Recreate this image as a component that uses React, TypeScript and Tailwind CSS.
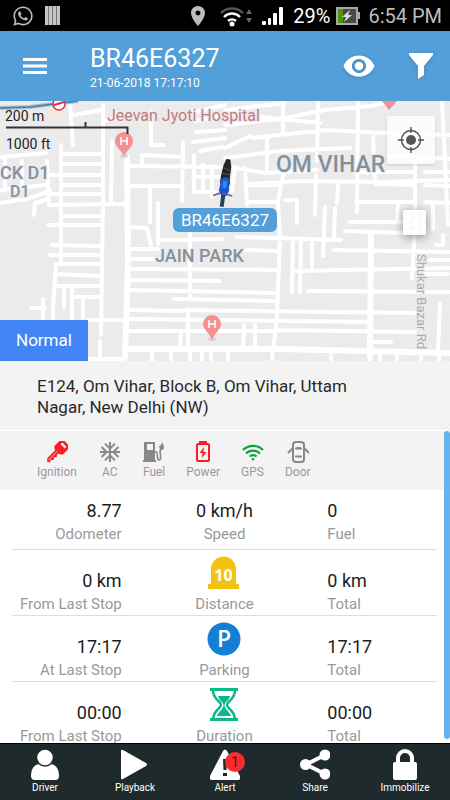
import type { ReactNode } from "react";
import { FaWhatsapp } from "react-icons/fa";
import { MdAcUnit, MdLocationOn, MdVisibility } from "react-icons/md";

const ROADS = [
  // left blocks
  "M103 4V100L101 234M100 240V257M61 44V162M47 60L49 104M112 40L111 102",
  "M63 53H101M63 63H101M50 74H101M63 84H101M50 93H101M49 104L125 103M63 115H101M48 124H103",
  "M52 144L100 145M50 154H100M57 163H100M57 173L100 175M57 185H100M72 196H100",
  "M56 163L53 206M64 186V206M72 187V218M83 197V217M43 198V218M31 207H45M53 209V219",
  "M88 219H125M88 258H125M70 2L73 44M74 14L101 9M103 20L126 14M0 89L46 84M0 102L27 98L50 90",
  "M34 114L35 102L48 98M5 58V90M22 60V84M0 56L46 52",
  // middle
  "M142 64V54L183 56M131 65L222 66M130 85H183M183 41L182 100M150 86V121M158 102V144",
  "M128 126L147 127L151 144M194 54V91H215M203 64V90M212 66V96M193 41L225 37M196 31L225 29M151 10V44H164",
  "M200 50L222 46M190 12L225 4M195 20L240 12M193 76H222",
  "M160 139L222 138M130 148H158M130 158H158M130 168L277 169M130 179L220 180M130 189L275 192M174 198L277 200M190 126V197",
  "M130 209L181 210M184 209L415 212M130 218L370 221M130 230H275M275 229L415 231",
  "M181 231L180 244M188 208V244M244 224L243 247M255 224V247",
  "M152 251V260M171 251V260M190 251V260M202 251V260M211 251V260M228 251V260",
  "M331 252V260M370 252V260M380 252V260M397 252V260M421 252V260M439 252V260",
  // right blocks
  "M225 24L280 18L325 9L370 5L390 1M225 9L285 2M252 37L325 29L388 32L450 34M225 47L250 35M262 16L320 22",
  "M225 57L280 50L350 47M225 65L265 72L317 69M248 83L300 80L380 81L450 79M375 83L415 84M356 71H415",
  "M356 101H415M350 121H405M345 130L405 132M425 84L450 85M425 71H450M425 101L450 102M390 55L450 58",
  "M283 1V33M318 1L317 60M316 74L315 114M358 1L357 111M373 32L375 83M267 37V71M338 82L337 102",
  "M283 74L278 101L280 134L277 217L272 258M245 67L247 104M235 66L232 90M247 84H280M247 101H278",
  "M442 1L445 60L448 124M285 99H297V122M325 106L323 155M335 107L334 137M398 102L397 121",
  "M237 136L341 139M334 149L450 151M245 149L277 150M294 170L450 167M293 139L292 191M301 139L300 191M312 139V168",
  "M308 190L450 191M372 241H391M440 202L438 249M415 56V128L412 177M436 144H443V134M425 173H448M430 159H450M433 104V128",
].join("");

const MAIN_ROADS = "M127 54L128 160L125 258M128 248L280 248L450 252M371 131L370 258";

function HospitalPin({ x, y }: { x: number; y: number }) {
  return (
    <g transform={`translate(${x} ${y})`}>
      <ellipse cx="0" cy="15" rx="4" ry="2" fill="#d5d5d5" />
      <path d="M0 16C-2 9-9 6-9 0A9 9 0 0 1 9 0C9 6 2 9 0 16Z" fill="#f48f92" />
      <path d="M-3-4V4M3-4V4M-3 0H3" stroke="#fff" strokeWidth="1.6" fill="none" />
    </g>
  );
}

function MapCanvas() {
  return (
    <svg viewBox="0 0 450 260" preserveAspectRatio="xMidYMid slice" className="block h-full w-full font-[Roboto,sans-serif]">
      <rect width="450" height="260" fill="#ebebeb" />
      <path d="M48 8L62 5L65 17L50 20Z" fill="#f3ebe0" />
      <path d={ROADS} fill="none" stroke="#fff" strokeWidth="4" strokeLinecap="round" strokeLinejoin="round" />
      <path d={MAIN_ROADS} fill="none" stroke="#fff" strokeWidth="6" strokeLinejoin="round" />
      <path d="M0 7L30 6L53 3L78 0" fill="none" stroke="#a9bccb" strokeWidth="4" />
      <path d="M0 7L30 6L53 3L78 0" fill="none" stroke="#3f7fb5" strokeWidth="1.5" />
      <circle cx="59" cy="3" r="6" fill="#fff" stroke="#d9364a" strokeWidth="1.5" />
      <path d="M54 4L64 1" stroke="#d9364a" strokeWidth="2" />

      <g stroke="#ebebeb" strokeWidth="2" strokeLinejoin="round" paintOrder="stroke" fill="#84909e" fontWeight="500">
        <text x="107" y="20" fontSize="16" fontWeight="400" fill="#c27a80">Jeevan Jyoti Hospital</text>
        <text x="276" y="71" fontSize="23">OM VIHAR</text>
        <text x="155" y="161" fontSize="18">JAIN PARK</text>
        <text x="0" y="78" fontSize="18">CK D1</text>
        <text x="10" y="96" fontSize="16">D1</text>
        <text transform="translate(417 153) rotate(90)" fontSize="13" fontWeight="400" fill="#ababab">Shukar Bazar Rd</text>
      </g>

      <HospitalPin x={124} y={40} />
      <HospitalPin x={212} y={223} />
      <path d="M382 0H397L389 9Z" fill="#f48f92" />

      {/* scale bar */}
      <g fill="#222" fontSize="14">
        <text x="5" y="20">200 m</text>
        <text x="6" y="48">1000 ft</text>
        <path d="M6 26.500H127.500V33M85.500 26V21" fill="none" stroke="#333" strokeWidth="2" />
      </g>

      {/* motorbike */}
      <g transform="translate(225 82) rotate(8)">
        <path d="M-2-24H2L4-17L4-6L5 1H-5L-5-6L-4-17Z" fill="#252525" />
        <path d="M-4-15L4-13M-4-9L4-9" stroke="#555" />
        <path d="M-4-4L0-6L4-4L5 8L3 13H-2L-5 8Z" fill="#1558cf" />
        <path d="M-2-2H2V5H-2Z" fill="#3584ef" />
        <path d="M-10 14L-4 11H4L9 12" stroke="#5d6470" strokeWidth="1.500" fill="none" />
        <path d="M-2 12H2V24H-2Z" fill="#2c3f63" />
      </g>
    </svg>
  );
}

function StatusBar() {
  return (
    <div className="flex h-[31px] shrink-0 items-center bg-black pr-2 pl-3 text-[#bdbdbd]">
      <FaWhatsapp className="h-[22px] w-[22px]" />
      <svg viewBox="0 0 15 19" className="ml-[11px] h-[19px] w-[15px]">
        <path d="M0 0H15V19H0Z" fill="#777" />
        <path d="M0 0H3V19H0ZM4 0H7V19H4ZM8 0H11V19H8ZM12 0H15V19H12Z" fill="#c4c4c4" />
      </svg>
      <div className="flex-1" />
      <MdLocationOn className="mr-2.5 h-6 w-6" />
      <svg viewBox="0 0 34 22" className="h-[22px] w-[34px]">
        <g fill="none" stroke="#fff" strokeWidth="2.500">
          <path d="M1 8A16 16 0 0 1 23 8" stroke="#555" />
          <path d="M4 12A11 11 0 0 1 20 12" />
          <path d="M8 16A6 6 0 0 1 16 16" />
        </g>
        <circle cx="12" cy="19" r="2.500" fill="#fff" />
        <path d="M26 9L29 4L32 9ZM26 13L29 18L32 13Z" fill="#666" />
      </svg>
      <svg viewBox="0 0 21 18" className="ml-2 h-[18px] w-[21px]" fill="#fff">
        <rect x="0" y="14" width="4" height="4" rx="1" />
        <rect x="6" y="11" width="3" height="7" rx="1" />
        <rect x="11" y="6" width="4" height="12" rx="1" />
        <rect x="17" y="0" width="4" height="18" rx="1" />
      </svg>
      <span className="ml-2.5 text-xl text-white">29%</span>
      <svg viewBox="0 0 24 18" className="ml-1.5 h-[18px] w-6">
        <path d="M21 5H24V12H21Z" fill="#aaa" />
        <rect x="1" y="1" width="20" height="16" fill="#4a4a4a" stroke="#aaa" strokeWidth="2" />
        <path d="M2 2H7V16H2Z" fill="#4b9a00" />
        <path d="M14 3L6 10H10L8 15L16 8H12Z" fill="#ddd" />
      </svg>
      <span className="ml-2 text-xl">6:54 PM</span>
    </div>
  );
}

function Header() {
  return (
    <header className="flex h-[70px] shrink-0 items-center bg-[#539fd9] pr-4 pl-[23px] text-white">
      <button type="button" aria-label="Menu">
        <svg viewBox="0 0 24 16" className="h-4 w-6" fill="#fff">
          <path d="M0 0H24V3H0ZM0 6.500H24V9.500H0ZM0 13H24V16H0Z" />
        </svg>
      </button>
      <div className="ml-[43px] flex-1 pt-1.5">
        <h1 className="text-[25px] leading-7">BR46E6327</h1>
        <p className="text-[12px] leading-5">21-06-2018 17:17:10</p>
      </div>
      <button type="button" aria-label="Show" className="drop-shadow-sm">
        <MdVisibility className="h-[34px] w-[34px]" />
      </button>
      <button type="button" aria-label="Filter" className="ml-8 drop-shadow-sm">
        <svg viewBox="0 0 26 26" className="h-[26px] w-[26px]" fill="#fff">
          <path d="M1 0H25V2L16 13V22L10 26V13L1 2Z" />
        </svg>
      </button>
    </header>
  );
}

function MapPanel() {
  return (
    <section className="relative h-[260px] shrink-0 overflow-hidden">
      <MapCanvas />
      <span className="absolute top-[107px] left-1/2 -translate-x-1/2 rounded-md bg-[#539fd9] px-2 text-[17px] leading-6 text-white">BR46E6327</span>
      <button type="button" aria-label="My location" className="absolute top-[15px] right-[15px] flex h-12 w-12 items-center justify-center rounded-xs bg-white/80 shadow-sm">
        <svg viewBox="0 0 26 26" className="h-[26px] w-[26px]" fill="none" stroke="#555" strokeWidth="1.500">
          <circle cx="13" cy="13" r="9.500" />
          <circle cx="13" cy="13" r="5" fill="#555" stroke="none" />
          <path d="M13 0V6M13 20V26M0 13H6M20 13H26" />
        </svg>
      </button>
      <button type="button" aria-label="Lock map" className="absolute top-[109px] right-6 flex h-[25px] w-[23px] items-center justify-center rounded-xs bg-white/90 shadow-[0_2px_10px_rgba(0,0,0,0.4)]">
        <span className="h-3 w-2.5 rounded-t-sm border border-[#f3f3f3]" />
      </button>
      <button type="button" className="absolute bottom-0 left-0 h-[41px] bg-[#4285f4] px-4 text-[17px] text-white">Normal</button>
    </section>
  );
}

const STATUS: { label: string; icon: ReactNode }[] = [
  {
    label: "Ignition",
    icon: (
      <svg viewBox="0 0 22 22" className="h-[22px] w-[22px]">
        <g transform="rotate(-45 11 11)" fill="#f81f24">
          <path d="M13 5H22Q24 5 24 7V15Q24 17 22 17H13L11 14V8ZM19 8V14H21.500V8Z" fillRule="evenodd" />
          <path d="M12 8.500H0L-3 11L-1 13.500L1 12L3 14.500L5 12.500L7 14.500L9 13H12Z" />
          <path d="M-1 10.700H12" stroke="#f3f3f3" strokeWidth=".7" />
        </g>
      </svg>
    ),
  },
  { label: "AC", icon: <MdAcUnit className="h-6 w-6 text-[#888]" /> },
  {
    label: "Fuel",
    icon: (
      <svg viewBox="0 0 22 22" className="h-[22px] w-[22px]">
        <path d="M2 1H12V19H13V21H0V19H1V1ZM4 3V9H10V3Z" fill="#888" fillRule="evenodd" />
        <path d="M12 11C16 10 13 19 16 19C19 19 17 13 17 10C18 8 20 8 20 6L19 2" fill="none" stroke="#888" strokeWidth="1.600" />
        <path d="M16 5L20 3L21 8L17 9Z" fill="#888" />
      </svg>
    ),
  },
  {
    label: "Power",
    icon: (
      <svg viewBox="0 0 22 22" className="h-[22px] w-[22px]" fill="#f81f24">
        <path d="M7 0H15V3H7Z" />
        <rect x="5" y="3" width="12" height="17" rx="1" fill="none" stroke="#f81f24" strokeWidth="2" />
        <path d="M12 6L7.500 12H10.500L10 17L14.500 11H11.500Z" />
      </svg>
    ),
  },
  {
    label: "GPS",
    icon: (
      <svg viewBox="0 0 22 22" className="h-[22px] w-[22px]" fill="none" stroke="#0aa53c" strokeWidth="2.200">
        <path d="M1 9A14 14 0 0 1 21 9M4 12.500A10 10 0 0 1 18 12.500M7.500 15.500A5.500 5.500 0 0 1 14.500 15.500" />
        <circle cx="11" cy="18.300" r="1.300" fill="#0aa53c" stroke="none" />
      </svg>
    ),
  },
  {
    label: "Door",
    icon: (
      <svg viewBox="0 0 22 22" className="h-[22px] w-[22px]" fill="none" stroke="#888" strokeWidth="2">
        <rect x="6" y="1" width="11" height="20" rx="3" />
        <path d="M8.500 7Q11.500 5.500 14.500 7V8H8.500ZM8.500 15H14.500V16H8.500Z" strokeWidth="1" fill="#888" />
        <path d="M6 7L1 12M17 7L22 12" />
      </svg>
    ),
  },
];

function StatusStrip() {
  return (
    <div className="flex h-[59px] shrink-0 gap-[21px] bg-[#f3f3f3] pt-2.5 pl-[37px]">
      {STATUS.map((s) => (
        <div key={s.label} className="flex flex-col items-center">
          <span className="flex h-[22px] items-center">{s.icon}</span>
          <span className="text-[12px] leading-[18px] text-[#999]">{s.label}</span>
        </div>
      ))}
    </div>
  );
}

function DistanceIcon() {
  return (
    <svg viewBox="0 0 32 34" className="h-[34px] w-8 font-['Open_Sans',sans-serif]">
      <path d="M3 28V13A12.500 12.500 0 0 1 28 13V28H31V33H0V28Z" fill="#f3c213" />
      <text x="15.500" y="25" textAnchor="middle" fontSize="16" fontWeight="700" fill="#fff">10</text>
    </svg>
  );
}

function ParkingIcon() {
  return (
    <svg viewBox="0 0 34 34" className="h-[34px] w-[34px] font-['Open_Sans',sans-serif]">
      <circle cx="17" cy="17" r="16.500" fill="#1380d6" />
      <text x="17" y="25" textAnchor="middle" fontSize="23" fontWeight="600" fill="#fff">P</text>
    </svg>
  );
}

function DurationIcon() {
  return (
    <svg viewBox="0 0 30 34" className="h-[34px] w-[30px]">
      <path d="M4 2C4 12 12 13 12 17S4 22 4 32M26 2C26 12 18 13 18 17S26 22 26 32" fill="none" stroke="#0eb68c" strokeWidth="2.500" />
      <path d="M1 0H29V3H1ZM1 30H29V33H1Z" fill="#0eb68c" />
      <path d="M9 8H21C20 13 15.500 14 15.500 17C15.500 21 21 24 22 28H8C9 24 14.500 21 14.500 17C14.500 14 10 13 9 8Z" fill="#0eb68c" />
    </svg>
  );
}

const ROWS: { left: string[]; center: string; top: ReactNode; right: string[]; box: string }[] = [
  { left: ["8.77", "Odometer"], center: "Speed", top: "0 km/h", right: ["0", "Fuel"], box: "h-[60px] border-b pb-2" },
  { left: ["0 km", "From Last Stop"], center: "Distance", top: <DistanceIcon />, right: ["0 km", "Total"], box: "h-[66px] border-b pb-1" },
  { left: ["17:17", "At Last Stop"], center: "Parking", top: <ParkingIcon />, right: ["17:17", "Total"], box: "h-[66px] border-b pb-1" },
  { left: ["00:00", "From Last Stop"], center: "Duration", top: <DurationIcon />, right: ["00:00", "Total"], box: "h-[61px]" },
];

function Stat({ value, label }: { value: ReactNode; label: string }) {
  return (
    <div>
      {typeof value === "string" ? (
        <div className="pb-1 text-lg leading-6 text-[#1c1c1c]">{value}</div>
      ) : (
        <div className="flex justify-center pb-[7px]">{value}</div>
      )}
      <div className="text-[15px] leading-[14px] text-[#999]">{label}</div>
    </div>
  );
}

function StatRows() {
  return (
    <div className="min-h-0 flex-1 bg-white pr-[7px] pl-3">
      {ROWS.map((row) => (
        <div key={row.center} className={`grid grid-cols-3 items-end border-[#ddd] ${row.box}`}>
          <div className="pr-8 text-right">
            <Stat value={row.left[0]} label={row.left[1]} />
          </div>
          <div className="text-center">
            <Stat value={row.top} label={row.center} />
          </div>
          <div className="pl-8">
            <Stat value={row.right[0]} label={row.right[1]} />
          </div>
        </div>
      ))}
    </div>
  );
}

const TABS: { label: string; badge?: number; icon: ReactNode }[] = [
  {
    label: "Driver",
    icon: (
      <>
        <path d="M1 27C1 19 5 15 10 15H20C25 15 29 19 29 27Q29 31 25 31H5Q1 31 1 27Z" />
        <circle cx="15" cy="8.500" r="8.500" stroke="#1f2a2d" strokeWidth="1.500" />
      </>
    ),
  },
  { label: "Playback", icon: <path d="M1 2Q1 0 3 1L26 14Q28 15.500 26 17L3 30Q1 31 1 29Z" /> },
  {
    label: "Alert",
    icon: (
      <path d="M13 2Q15-1 17 2L30 27Q31 31 28 31H2Q-1 31 0 27ZM13 10L13.500 21H16.500L17 10ZM13 24V27H17V24Z" fillRule="evenodd" />
    ),
    badge: 1,
  },
  {
    label: "Share",
    icon: (
      <>
        <path d="M25 6L6 15.500L25 25" fill="none" stroke="#fff" strokeWidth="4" />
        <circle cx="25" cy="6" r="5.500" />
        <circle cx="5.500" cy="15.500" r="5.500" />
        <circle cx="25" cy="25" r="5.500" />
      </>
    ),
  },
  {
    label: "Immobilize",
    icon: (
      <>
        <path d="M8 15V9A7 7 0 0 1 22 9V15" fill="none" stroke="#fff" strokeWidth="4" />
        <rect x="3" y="13" width="24" height="18" rx="2" />
      </>
    ),
  },
];

function BottomNav() {
  return (
    <nav className="grid h-[57px] shrink-0 grid-cols-5 border-t border-black bg-[#1f2a2d]">
      {TABS.map((tab) => (
        <button key={tab.label} type="button" className="flex flex-col items-center pt-[5px] text-white">
          <span className="relative">
            <svg viewBox="0 0 30 31" className="block h-[31px] w-[30px]" fill="#fff">
              {tab.icon}
            </svg>
            {tab.badge && (
              <span className="absolute top-[3px] -right-[5px] h-5 w-5 rounded-full bg-[#fb2c2f] text-center text-sm leading-5 text-[#4a1010]">
                {tab.badge}
              </span>
            )}
          </span>
          <span className="text-[10px] leading-4">{tab.label}</span>
        </button>
      ))}
    </nav>
  );
}

export default function App() {
  return (
    <div className="flex h-screen flex-col overflow-hidden bg-white font-[Roboto,sans-serif]">
      <StatusBar />
      <Header />
      <MapPanel />
      <div className="shrink-0 border-b border-white bg-[#f3f3f3] pt-[15px] pr-16 pb-3 pl-[37px]">
        <p className="text-[17px] leading-[21px] text-[#2a2a2a]">E124, Om Vihar, Block B, Om Vihar, Uttam Nagar, New Delhi (NW)</p>
      </div>
      <div className="flex min-h-0 flex-1">
        <div className="flex min-w-0 flex-1 flex-col">
          <StatusStrip />
          <StatRows />
        </div>
        <div className="w-1.5 bg-white pb-1">
          <div className="h-full rounded-full bg-[#66b3ec]" />
        </div>
      </div>
      <BottomNav />
    </div>
  );
}
